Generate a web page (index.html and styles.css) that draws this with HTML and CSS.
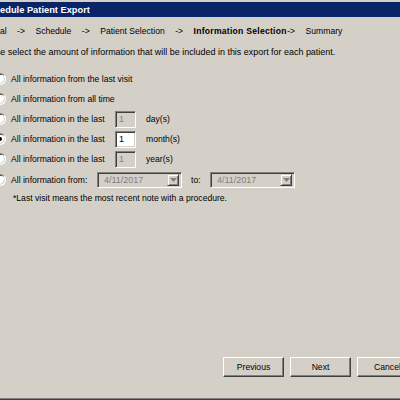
FILE: index.html
```html
<!DOCTYPE html>
<html>
<head>
<meta charset="utf-8">
<link rel="stylesheet" href="styles.css">
</head>
<body>
<div class="win">
  <div class="titlebar"><span class="title">Schedule Patient Export</span></div>
  <div class="steps">
    <span class="step first">General</span>
    <span class="arrow">-&gt;</span>
    <span class="step">Schedule</span>
    <span class="arrow">-&gt;</span>
    <span class="step">Patient Selection</span>
    <span class="arrow">-&gt;</span>
    <span class="step current">Information Selection</span>
    <span class="arrow tight">-&gt;</span>
    <span class="step">Summary</span>
  </div>
  <p class="desc"><span class="clip">Please select the amount of information that will be included in this export for each patient.</span></p>
  <div class="options">
    <div class="opt"><span class="radio"></span><span class="label">All information from the last visit</span></div>
    <div class="opt"><span class="radio"></span><span class="label">All information from all time</span></div>
    <div class="opt"><span class="radio"></span><span class="label fixed">All information in the last</span><span class="box disabled">1</span><span class="unit">day(s)</span></div>
    <div class="opt"><span class="radio checked"></span><span class="label fixed">All information in the last</span><span class="box">1</span><span class="unit">month(s)</span></div>
    <div class="opt"><span class="radio"></span><span class="label fixed">All information in the last</span><span class="box disabled">1</span><span class="unit">year(s)</span></div>
    <div class="opt"><span class="radio"></span><span class="label from">All information from:</span>
      <span class="combo"><span class="ctext">4/11/2017</span><span class="cbtn"><svg width="7" height="4" viewBox="0 0 7 4"><path d="M0 0H7L3.5 4Z" fill="#808080"/></svg></span></span>
      <span class="to">to:</span>
      <span class="combo"><span class="ctext">4/11/2017</span><span class="cbtn"><svg width="7" height="4" viewBox="0 0 7 4"><path d="M0 0H7L3.5 4Z" fill="#808080"/></svg></span></span>
    </div>
  </div>
  <p class="note">*Last visit means the most recent note with a procedure.</p>
  <div class="spacer"></div>
  <div class="buttons">
    <button class="btn">Previous</button>
    <button class="btn">Next</button>
    <button class="btn">Cancel</button>
  </div>
</div>
</body>
</html>
```
FILE: styles.css
```css
html, body {
  margin: 0;
  padding: 0;
  width: 400px;
  height: 400px;
  overflow: hidden;
  background: #d4d0c8;
}
.win {
  width: 400px;
  height: 398px;
  border-bottom: 1px solid #808080;
  box-shadow: 0 1px 0 #404040;
  display: flex;
  flex-direction: column;
  font-family: "Liberation Sans", Arial, sans-serif;
  font-size: 8.6px;
  color: #000;
  overflow: hidden;
}
.titlebar {
  margin-top: 2px;
  height: 15px;
  background: #0a246a;
  display: flex;
  align-items: center;
  white-space: nowrap;
}
.title {
  margin-left: -17px;
  color: #fff;
  font-weight: bold;
  font-size: 9.3px;
}
.steps {
  margin-top: 8px;
  height: 12px;
  display: flex;
  align-items: center;
  gap: 10.5px;
  white-space: nowrap;
}
.step.first { margin-left: -24px; }
.step.current { font-weight: bold; letter-spacing: 0.25px; }
.arrow.tight { margin-left: -10px; }
.desc {
  margin: 9px 0 0 0;
  height: 12px;
  line-height: 12px;
  white-space: nowrap;
  font-size: 8.95px;
}
.clip { margin-left: -22px; }
.options {
  margin-top: 11px;
  display: flex;
  flex-direction: column;
}
.opt {
  height: 20.1px;
  display: flex;
  align-items: center;
  white-space: nowrap;
}
.radio {
  width: 12px;
  height: 12px;
  margin-left: -6px;
  margin-right: 5px;
  box-sizing: border-box;
  border-radius: 50%;
  background: #fff;
  border: 1px solid;
  border-color: #808080 #fff #fff #808080;
  box-shadow: inset 1px 1px 0 #404040, inset -1px -1px 0 #d4d0c8;
  position: relative;
  flex: none;
}
.radio.checked::after {
  content: "";
  position: absolute;
  left: 3px;
  top: 3px;
  width: 4px;
  height: 4px;
  border-radius: 50%;
  background: #000;
}
.label.fixed { width: 104px; }
.label.from { width: 86px; }
.box {
  width: 21px;
  height: 17px;
  box-sizing: border-box;
  background: #fff;
  border: 1px solid;
  border-color: #808080 #fff #fff #808080;
  box-shadow: inset 1px 1px 0 #404040, inset -1px -1px 0 #d4d0c8;
  padding-left: 3px;
  line-height: 15px;
  font-size: 9px;
}
.box.disabled {
  background: #d4d0c8;
  color: #808080;
}
.unit { margin-left: 10px; }
.combo {
  width: 85px;
  height: 16px;
  box-sizing: border-box;
  border: 1px solid;
  border-color: #808080 #fff #fff #808080;
  box-shadow: inset 1px 1px 0 #404040, inset -1px -1px 0 #d4d0c8;
  display: flex;
  align-items: center;
  justify-content: space-between;
  padding: 1px 2px 1px 6px;
  color: #808080;
  font-size: 9px;
}
.cbtn {
  width: 12px;
  height: 12px;
  box-sizing: border-box;
  background: #d4d0c8;
  border: 1px solid;
  border-color: #d4d0c8 #404040 #404040 #d4d0c8;
  box-shadow: inset 1px 1px 0 #fff, inset -1px -1px 0 #808080;
  display: flex;
  align-items: center;
  justify-content: center;
}
.to {
  margin-left: 9px;
  width: 19px;
}
.note {
  margin: 2px 0 0 13px;
  height: 12px;
  line-height: 12px;
  white-space: nowrap;
}
.spacer { flex: 1; }
.buttons {
  display: flex;
  gap: 6px;
  padding-left: 223px;
  margin-bottom: 21px;
}
.btn {
  flex: none;
  width: 61px;
  height: 20px;
  box-sizing: border-box;
  background: #d4d0c8;
  border: 1px solid;
  border-color: #fff #404040 #404040 #fff;
  box-shadow: inset -1px -1px 0 #808080;
  font-family: "Liberation Sans", Arial, sans-serif;
  font-size: 8.6px;
  color: #000;
  padding: 0;
}
```
